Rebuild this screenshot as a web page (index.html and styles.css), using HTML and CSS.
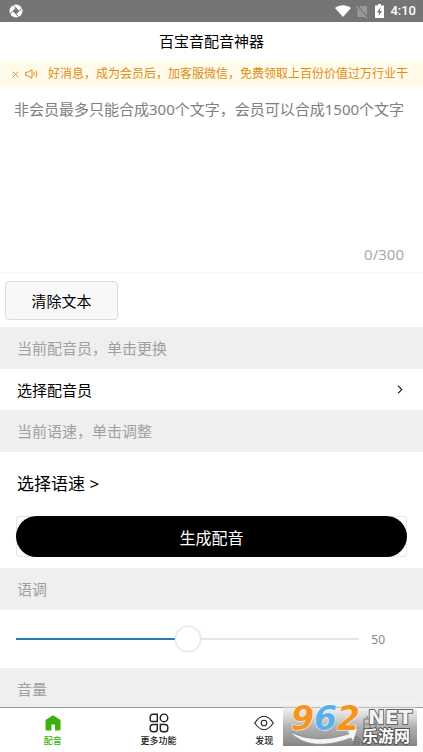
FILE: index.html
```html
<!DOCTYPE html>
<html lang="zh-CN">
<head>
<meta charset="utf-8">
<meta name="viewport" content="width=device-width, initial-scale=1">
<title>百宝音配音神器</title>
<link rel="stylesheet" href="styles.css">
</head>
<body>
<div class="status">
  <svg class="status-app" viewBox="0 0 14 14" aria-hidden="true">
    <circle cx="7" cy="7" r="6.5" fill="#fff"/>
    <path d="M7 3.600 10.400 7 7 10.400 3.600 7z" fill="#757575"/>
    <path d="M7 3.600 4.200 1.400M10.400 7l2.200-2.800M7 10.400l2.800 2.200M3.600 7l-2.200 2.800" stroke="#757575" stroke-width=".9"/>
  </svg>
  <svg class="status-wifi" viewBox="0 0 16 12" aria-hidden="true"><path d="M0 3C4.500-.6 11.500-.6 16 3L8 12z" fill="#fff"/></svg>
  <svg class="status-sim" viewBox="0 0 12 13" aria-hidden="true">
    <path d="M4.500 1H11v11H1.500V4z" fill="#999"/>
    <path d="M.5.5 11.500 12.500" stroke="#757575" stroke-width="2"/>
    <path d="M0 1 11 13" stroke="#aaa"/>
  </svg>
  <svg class="status-battery" viewBox="0 0 9 14" aria-hidden="true">
    <path d="M3 0h3v1.500h3V14H0V1.500h3z" fill="#fff"/>
    <path d="M5.500 3.500 2 8.500h2L3.500 12 7 7H5z" fill="#757575"/>
  </svg>
  <span class="clock">4:10</span>
</div>
<header class="title"><h1>百宝音配音神器</h1></header>
<div class="notice">
  <button class="notice-close" type="button" aria-label="关闭">
    <svg viewBox="0 0 7 7"><path d="M.7.7l5.600 5.600M6.300.7.7 6.300"/></svg>
  </button>
  <svg class="speaker" viewBox="0 0 13 10" aria-hidden="true">
    <path d="M.6 3.300h2L7 .8v8.400L2.600 6.700h-2zM8.800 3.200q1.200 1.800 0 3.600M10.900 1.700q2.200 3.300 0 6.600"/>
  </svg>
  <p class="notice-text">好消息，成为会员后，加客服微信，免费领取上百份价值过万行业干</p>
</div>
<main class="page">
  <div class="editor">
    <textarea class="editor-input" aria-label="配音文本" placeholder="非会员最多只能合成300个文字，会员可以合成1500个文字"></textarea>
    <span class="counter">0/300</span>
  </div>
  <div class="actions"><button class="clear" type="button">清除文本</button></div>
  <h2 class="section">当前配音员，单击更换</h2>
  <button class="row" type="button">
    <span>选择配音员</span>
    <svg class="chevron" viewBox="0 0 6 9" aria-hidden="true"><path d="M1 .7l3.800 3.800L1 8.300"/></svg>
  </button>
  <h2 class="section">当前语速，单击调整</h2>
  <div class="speed">
    <button class="speed-pick" type="button">选择语速 &gt;</button>
    <div class="make-frame"><button class="make" type="button">生成配音</button></div>
  </div>
  <h2 class="section"><label for="pitch">语调</label></h2>
  <div class="slider">
    <input class="range" id="pitch" type="range" min="0" max="100" value="50">
    <output class="range-value" for="pitch">50</output>
  </div>
  <h2 class="section">音量</h2>
</main>
<nav class="tabs">
  <a class="tab tab-active" href="#voice">
    <svg viewBox="0 0 20 20" aria-hidden="true"><path d="M10 2.300 17.500 7v9q0 1.500-1.500 1.500h-4v-6H8.500v6H4Q2.500 17.500 2.500 16V7z" fill="currentColor"/></svg>
    <span>配音</span>
  </a>
  <a class="tab" href="#more">
    <svg viewBox="0 0 20 20" aria-hidden="true"><g fill="none" stroke="currentColor" stroke-width="1.400"><path d="M4 1.200h4.300v7.300H3.200Q1.200 8.500 1.200 6.500V4Q1.200 1.200 4 1.200z"/><circle cx="15" cy="4.900" r="3.800"/><path d="M4 11.500h4.300v4.500q0 2.800-2.800 2.800H4Q1.200 18.800 1.200 16v-1.700q0-2.800 2.800-2.800zM11.300 11.500H16q2.800 0 2.800 2.800V16q0 2.800-2.800 2.800h-1.900q-2.800 0-2.800-2.800z"/></g></svg>
    <span>更多功能</span>
  </a>
  <a class="tab" href="#discover">
    <svg viewBox="0 0 20 20" aria-hidden="true"><g fill="none" stroke="currentColor" stroke-width="1.100"><path d="M.7 10Q10-3.400 19.300 10 10 23.400.7 10z"/><circle cx="10" cy="10" r="2.800"/></g></svg>
    <span>发现</span>
  </a>
  <a class="tab" href="#member">
    <svg viewBox="0 0 20 20" aria-hidden="true"><path d="M4 6h12v11H4zM10 2v15M4 11h12M7 6V3" fill="none" stroke="currentColor" stroke-width="1.200"/></svg>
    <span>会员中心</span>
  </a>
  <svg class="stamp" viewBox="0 0 134 44" role="img" aria-label="962 NET 乐游网">
    <defs>
      <linearGradient id="shade" x1="0" y1="0" x2="0" y2="1">
        <stop offset="0" stop-color="#fff" stop-opacity=".35"/>
        <stop offset=".15" stop-color="#ddd" stop-opacity=".5"/>
        <stop offset=".55" stop-color="#999" stop-opacity=".75"/>
        <stop offset="1" stop-color="#777" stop-opacity=".9"/>
      </linearGradient>
    </defs>
    <rect width="134" height="44" fill="url(#shade)"/>
    <path d="M7 30Q32 43 66 32l-2-3 11-3-5 14-2-4Q27 51 7 30z" fill="#f4f4f4" stroke="#888" stroke-width=".6"/>
    <text class="stamp-number" x="8" y="28"><tspan fill="#f7941e">9</tspan><tspan fill="#5cb0e8">6</tspan><tspan fill="#f7941e">2</tspan></text>
    <text class="stamp-net" x="85" y="22">NET</text>
    <text class="stamp-name" x="79" y="40">乐游网</text>
  </svg>
</nav>
</body>
</html>
```
FILE: styles.css
```css
* {
  box-sizing: border-box;
}

body {
  margin: 0;
  height: 100vh;
  display: flex;
  flex-direction: column;
  overflow: hidden;
  background: #fff;
  color: #000;
  font-family: "Noto Sans", "Noto Sans CJK SC", sans-serif;
  font-size: 15px;
}

h1,
h2,
p {
  margin: 0;
  font-weight: 400;
}

button {
  font: inherit;
  color: inherit;
  border: 0;
  padding: 0;
  background: none;
}

svg {
  flex: none;
}

.status {
  flex: none;
  display: flex;
  align-items: center;
  height: 22px;
  padding: 0 7px 0 9px;
  background: #757575;
}

.status-app {
  width: 14px;
  height: 14px;
  margin-right: auto;
}

.status-wifi {
  width: 16px;
  height: 12px;
}

.status-sim {
  width: 12px;
  height: 13px;
  margin-left: 5px;
}

.status-battery {
  width: 9px;
  height: 14px;
  margin: 0 6px 0 7px;
}

.clock {
  color: #fff;
  font: 500 13px/22px Roboto, sans-serif;
}

.title {
  flex: none;
  height: 39px;
}

.title h1 {
  font-size: 15px;
  line-height: 39px;
  text-align: center;
}

.notice {
  flex: none;
  display: flex;
  align-items: center;
  height: 26px;
  padding: 0 9px 0 12px;
  background: #fffbe8;
  color: #de8c17;
}

.notice svg {
  fill: none;
  stroke: currentColor;
}

.notice-close {
  display: flex;
  width: 7px;
}

.notice-close svg {
  width: 7px;
  height: 7px;
}

.speaker {
  width: 13px;
  height: 10px;
  margin: 0 10px 0 6px;
}

.notice-text {
  flex: 1;
  overflow: hidden;
  white-space: nowrap;
  font-size: 12px;
  line-height: 26px;
}

.page {
  flex: 1;
  min-height: 0;
  overflow: hidden;
}

.editor {
  display: flex;
  flex-direction: column;
  height: 186px;
  padding: 11px 14px 7px;
  border-bottom: 1px solid #f8f8f8;
}

.editor-input {
  flex: 1;
  width: 100%;
  border: 0;
  padding: 0;
  resize: none;
  outline: 0;
  overflow: hidden;
  background: none;
  font: inherit;
  line-height: 22px;
}

.editor-input::placeholder {
  color: #808080;
}

.counter {
  align-self: flex-end;
  margin-right: 5px;
  color: #aaa;
  line-height: 22px;
}

.actions {
  padding: 8px 5px 7px;
}

.clear {
  display: block;
  width: 113px;
  height: 39px;
  border: 1px solid #dcdcdc;
  border-radius: 4px;
  background: #f8f8f8;
}

.section {
  padding: 0 17px;
  background: #efefef;
  color: #a0a0a0;
  font-size: 15px;
  line-height: 42px;
}

.row {
  display: flex;
  align-items: center;
  justify-content: space-between;
  width: 100%;
  height: 41px;
  padding: 0 20px 0 17px;
}

.chevron {
  width: 6px;
  height: 9px;
  fill: none;
  stroke: #222;
  stroke-width: 1.2;
}

.speed {
  padding: 10px 16px 11px;
}

.speed-pick {
  display: block;
  height: 40px;
  padding-left: 1px;
  margin-bottom: 14px;
  font-size: 17px;
}

.make-frame {
  border-radius: 4px;
  box-shadow: inset 0 0 0 1px #e4e4e4;
}

.make {
  display: block;
  width: 100%;
  height: 41px;
  border-radius: 21px;
  background: #000;
  color: #fff;
  font-size: 16px;
}

.slider {
  display: flex;
  align-items: center;
  gap: 12px;
  height: 58px;
  padding: 0 38px 0 16px;
}

.range {
  flex: 1;
  min-width: 0;
  height: 28px;
  margin: 0;
  appearance: none;
  background: none;
}

.range::-webkit-slider-runnable-track {
  height: 2px;
  background: linear-gradient(to right, #267eaf 50%, #e6e6e6 50%);
}

.range::-webkit-slider-thumb {
  appearance: none;
  width: 26px;
  height: 26px;
  margin-top: -12px;
  border: 1px solid #e6e6e6;
  border-radius: 50%;
  background: #fff;
  box-shadow: 0 0 2px #ddd;
}

.range-value {
  color: #888;
  font-size: 12px;
}

.tabs {
  flex: none;
  position: relative;
  display: grid;
  grid-template-columns: repeat(4, 1fr);
  height: 45px;
  border-top: 1px solid #999;
  background: #fff;
}

.tab {
  display: flex;
  flex-direction: column;
  align-items: center;
  padding-top: 5px;
  color: #222;
  font-size: 9px;
  font-weight: 500;
  line-height: 16px;
  text-decoration: none;
}

.tab svg {
  width: 20px;
  height: 20px;
}

.tab-active {
  color: #3cb10c;
}

.stamp {
  position: absolute;
  right: 6px;
  bottom: 6px;
  width: 134px;
  height: 44px;
  overflow: visible;
}

.stamp text {
  font-family: "DejaVu Sans", sans-serif;
  font-weight: 700;
  paint-order: stroke;
  stroke-linejoin: round;
}

.stamp .stamp-number {
  font-size: 33px;
  font-style: oblique;
  stroke: #fff;
  stroke-width: 1px;
}

.stamp .stamp-net {
  font-size: 20px;
  fill: #f4f4f4;
  stroke: #666;
  stroke-width: 2px;
}

.stamp .stamp-name {
  font-family: "Noto Sans CJK SC", sans-serif;
  font-size: 16px;
  fill: #fff;
  stroke: #555;
  stroke-width: 2px;
}
```
